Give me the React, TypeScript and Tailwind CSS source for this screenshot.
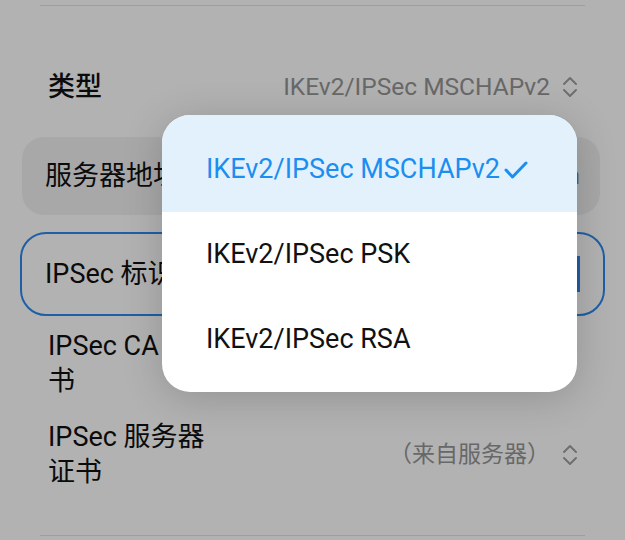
import React from "react";

const UpDown = () => (
  <svg width="16" height="26" viewBox="0 0 16 26" fill="none" stroke="#a0a0a0" strokeWidth="2" strokeLinecap="round" strokeLinejoin="round">
    <path d="M2 10 L8 4 L14 10" />
    <path d="M2 16 L8 22 L14 16" />
  </svg>
);

const Check = () => (
  <svg width="24" height="20" viewBox="0 0 24 20" fill="none" stroke="#1c8ef0" strokeWidth="3" strokeLinecap="round" strokeLinejoin="round">
    <path d="M2 10 L8.5 17 L22 3" />
  </svg>
);

const options = ["IKEv2/IPSec MSCHAPv2", "IKEv2/IPSec PSK", "IKEv2/IPSec RSA"];

export default function App() {
  return (
    <div className="relative h-[540px] w-[625px] overflow-hidden bg-white font-['Roboto','Noto_Sans_CJK_SC',sans-serif] text-[#111]">
      {/* settings page */}
      <div className="flex flex-col pt-[5px]">
        <div className="mx-[40px] h-px bg-[#e3e3e3]" />

        <div className="mt-[51px] flex h-[60px] items-center justify-between pl-[48px] pr-[47px]">
          <span className="text-[27px] font-medium">类型</span>
          <div className="flex items-center gap-[12px]">
            <span className="text-[24.5px] text-[#969696]">IKEv2/IPSec MSCHAPv2</span>
            <UpDown />
          </div>
        </div>

        <div className="ml-[22px] mr-[25px] mt-[20px] flex h-[78px] items-center justify-between rounded-[22px] bg-[#f1f1f1] pl-[23px] pr-[20px]">
          <span className="text-[27px]">服务器地址</span>
          <span className="text-[24px] text-[#8a8a8a]">vpn.cn</span>
        </div>

        <div className="ml-[20px] mr-[20px] mt-[17px] flex h-[84px] items-center justify-between rounded-[26px] border-2 border-[#2b88ee] pl-[23px] pr-[23px]">
          <span className="text-[27px]">IPSec 标识符</span>
          <span className="h-[36px] w-[3px] bg-[#2b88ee]" />
        </div>

        <div className="mt-[13px] flex pl-[48px] pr-[47px]">
          <span className="w-[165px] text-[27px] leading-[35px]">IPSec CA 证书</span>
        </div>

        <div className="mt-[21px] flex items-center justify-between pl-[48px] pr-[47px]">
          <span className="w-[165px] text-[27px] leading-[35px]">IPSec 服务器证书</span>
          <div className="flex items-center gap-[12px]">
            <span className="text-[23px] text-[#969696]">（来自服务器）</span>
            <UpDown />
          </div>
        </div>

        <div className="mx-[40px] mt-[45px] h-px bg-[#e3e3e3]" />
      </div>

      {/* dim overlay */}
      <div className="absolute inset-0 bg-black/30" />

      {/* dropdown menu */}
      <div className="absolute left-[162px] top-[115px] w-[415px] overflow-hidden rounded-[28px] bg-white pb-[10px] shadow-[0_6px_40px_rgba(0,0,0,0.18)]">
        {options.map((o, i) => (
          <div
            key={o}
            className={
              i === 0
                ? "flex h-[97px] items-center gap-[4px] bg-[#e3f1fd] pl-[44px] pt-[12px] text-[27px] text-[#1c8ef0]"
                : "flex h-[85px] items-center pl-[44px] text-[27px] text-[#111]"
            }
          >
            <span>{o}</span>
            {i === 0 && <Check />}
          </div>
        ))}
      </div>
    </div>
  );
}
